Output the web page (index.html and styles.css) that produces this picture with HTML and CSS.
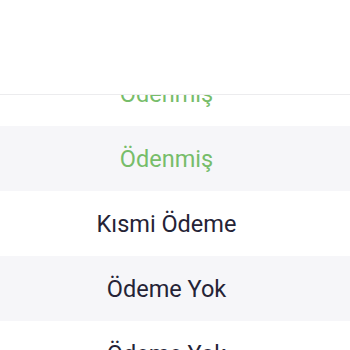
FILE: index.html
```
<!DOCTYPE html>
<html>
<head>
<meta charset="utf-8">
<link rel="stylesheet" href="styles.css">
</head>
<body>
<div class="page">
  <div class="header"></div>
  <div class="viewport">
    <ul class="list">
      <li class="row paid">Ödenmiş</li>
      <li class="row alt paid">Ödenmiş</li>
      <li class="row">Kısmi Ödeme</li>
      <li class="row alt">Ödeme Yok</li>
      <li class="row">Ödeme Yok</li>
    </ul>
  </div>
</div>
</body>
</html>
```
FILE: styles.css
```
html, body {
  margin: 0;
  padding: 0;
  background: #ffffff;
}
.page {
  width: 350px;
  height: 350px;
  display: flex;
  flex-direction: column;
  overflow: hidden;
}
.header {
  height: 94px;
  border-bottom: 1px solid #ececee;
  flex: none;
}
.viewport {
  flex: 1;
  overflow: hidden;
}
.list {
  list-style: none;
  margin: -34px 0 0 0;
  padding: 0;
}
.row {
  height: 65px;
  display: flex;
  align-items: center;
  justify-content: center;
  padding: 1px 17px 0 0;
  box-sizing: border-box;
  font-family: Roboto, "Noto Sans", sans-serif;
  font-size: 23.5px;
  color: #252336;
  background: #ffffff;
}
.row.alt {
  background: #f6f6f9;
}
.row.paid {
  color: #77bd6a;
}
```
